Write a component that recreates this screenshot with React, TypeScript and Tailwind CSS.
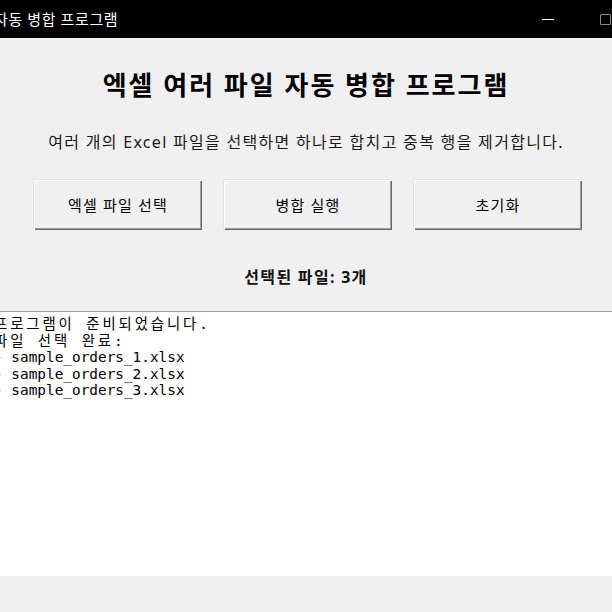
import React from "react";

const ui = { fontFamily: '"Noto Sans", "Noto Sans CJK KR", sans-serif' };
const mono = { fontFamily: '"DejaVu Sans Mono", "Noto Sans CJK KR", monospace' };

const files = ["sample_orders_1.xlsx", "sample_orders_2.xlsx", "sample_orders_3.xlsx"];

export default function App() {
  return (
    <div className="w-[612px] h-[612px] overflow-hidden bg-[#f0f0f0] flex flex-col" style={ui}>
      {/* title bar */}
      <div className="h-[38px] bg-black flex items-center shrink-0">
        <span className="ml-[-6px] text-white text-[15px] tracking-[0.6px] leading-none whitespace-nowrap">자동 병합 프로그램</span>
        <div className="ml-auto w-[12px] h-px bg-white" />
        <div className="ml-[46px] mr-[1px] w-[11px] h-[11px] border border-[#8a8a8a] rounded-[1px]" />
      </div>

      {/* top panel */}
      <div className="h-[273px] shrink-0 flex flex-col items-center">
        <h1 className="mt-[32px] text-[26px] tracking-[2px] leading-[30px] font-bold text-black whitespace-nowrap">
          엑셀 여러 파일 자동 병합 프로그램
        </h1>
        <p className="mt-[32px] text-[16px] tracking-[1.3px] leading-[20px] text-[#1a1a1a] whitespace-nowrap">
          여러 개의 Excel 파일을 선택하면 하나로 합치고 중복 행을 제거합니다.
        </p>
        <div className="mt-[27px] pl-[3px] flex gap-[21px]">
          <Btn label="엑셀 파일 선택" />
          <Btn label="병합 실행" />
          <Btn label="초기화" />
        </div>
        <p className="mt-[37px] text-[16px] tracking-[1.3px] leading-[20px] font-bold text-[#111]">선택된 파일: 3개</p>
      </div>

      {/* log */}
      <div className="h-[265px] shrink-0 bg-white border-t border-[#a0a0a0] pt-[4px] text-[14.4px] leading-[16.5px] text-black" style={mono}>
        <div className="ml-[-6px] whitespace-pre">
          <div className="tracking-[2.9px]">프로그램이 준비되었습니다.</div>
          <div className="tracking-[2.9px]">파일 선택 완료:</div>
          {files.map((f) => (
            <div key={f}>- {f}</div>
          ))}
        </div>
      </div>

      <div className="flex-1 bg-[#f0f0f0]" />
    </div>
  );
}

function Btn({ label }: { label: string }) {
  return (
    <button className="w-[169px] h-[51px] bg-[#f0f0f0] text-[15px] tracking-[1.2px] text-black shadow-[inset_1px_1px_#ffffff,inset_-1px_-1px_#696969,inset_-2px_-2px_#a0a0a0] border-t border-l border-[#e3e3e3] border-b-0 border-r-0">
      {label}
    </button>
  );
}
